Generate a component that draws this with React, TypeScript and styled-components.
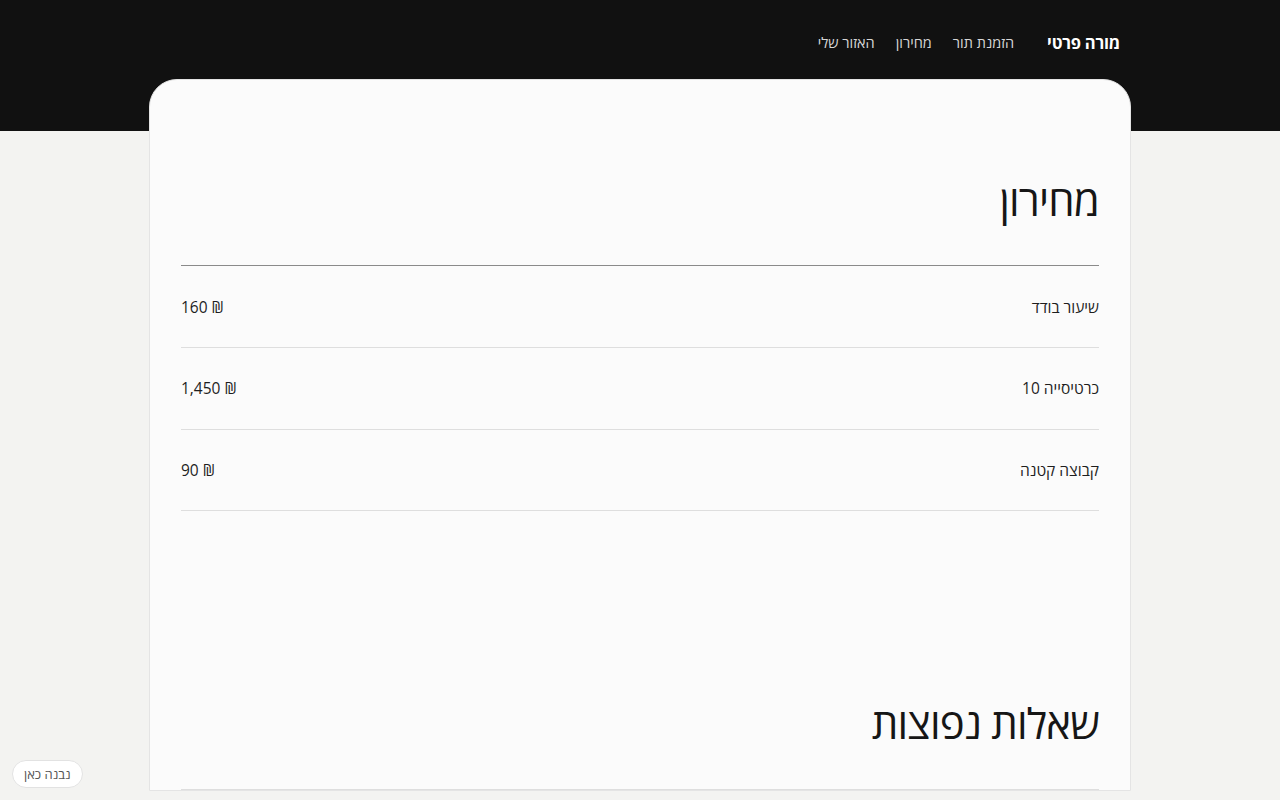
import React from 'react';
import styled, { createGlobalStyle } from 'styled-components';

const GlobalStyle = createGlobalStyle`
  html, body {
    margin: 0;
    padding: 0;
    background: #f3f3f1;
    font-family: "Open Sans", "DejaVu Sans", sans-serif;
    color: #1c1c1c;
  }
`;

const prices = [
  { name: 'שיעור בודד', price: '160 ₪' },
  { name: 'כרטיסייה 10', price: '1,450 ₪' },
  { name: 'קבוצה קטנה', price: '90 ₪' },
];

function App() {
  return (
    <Page dir="rtl">
      <GlobalStyle />
      <Header>
        <HeaderInner>
          <Brand>מורה פרטי</Brand>
          <Nav>
            <NavLink>הזמנת תור</NavLink>
            <NavLink>מחירון</NavLink>
            <NavLink>האזור שלי</NavLink>
          </Nav>
        </HeaderInner>
      </Header>

      <Card>
        <Section>
          <Title>מחירון</Title>
          <List $strong>
            {prices.map(p => (
              <PriceRow key={p.name}>
                <span>{p.name}</span>
                <Price>{p.price}</Price>
              </PriceRow>
            ))}
          </List>
        </Section>

        <Section>
          <Title>שאלות נפוצות</Title>
          <List />
        </Section>
      </Card>

      <BuiltBadge>נבנה כאן</BuiltBadge>
    </Page>
  );
}

const Page = styled.div`
  min-height: 800px;
`;

const Header = styled.header`
  background: #111111;
  height: 131px;
`;

const HeaderInner = styled.div`
  width: 980px;
  margin: 0 auto;
  padding: 31px 10px 0;
  box-sizing: border-box;
  display: flex;
  align-items: center;
  gap: 33px;
`;

const Brand = styled.div`
  color: #ffffff;
  font-size: 16.5px;
  font-weight: 700;
  letter-spacing: -0.2px;
`;

const Nav = styled.nav`
  display: flex;
  gap: 21px;
`;

const NavLink = styled.a`
  color: #d6d6d6;
  font-size: 14.5px;
  cursor: pointer;
`;

const Card = styled.main`
  width: 982px;
  box-sizing: border-box;
  margin: -52px auto 0;
  background: #fbfbfb;
  border: 1px solid #e4e4e4;
  border-radius: 28px 28px 0 0;
  padding: 95px 31px 0;
  display: flex;
  flex-direction: column;
  gap: 187px;
`;

const Section = styled.section`
  display: flex;
  flex-direction: column;
`;

const Title = styled.h2`
  margin: 0 0 40px;
  font-size: 42px;
  font-weight: 400;
  line-height: 1.2;
  letter-spacing: -0.02em;
  color: #161616;
`;

const List = styled.div<{ $strong?: boolean }>`
  border-top: 1px solid ${p => (p.$strong ? '#8a8a8a' : '#dedede')};
`;

const PriceRow = styled.div`
  display: flex;
  justify-content: space-between;
  align-items: center;
  height: 81.6px;
  border-bottom: 1px solid #dedede;
  box-sizing: border-box;
  font-size: 15.5px;
  color: #1e1e1e;
`;

const Price = styled.span`
  direction: ltr;
`;

const BuiltBadge = styled.div`
  position: fixed;
  left: 12px;
  bottom: 12px;
  padding: 4px 11px;
  background: #ffffff;
  border: 1px solid #e2e2e2;
  border-radius: 999px;
  font-size: 13px;
  color: #555;
`;

export default App;
